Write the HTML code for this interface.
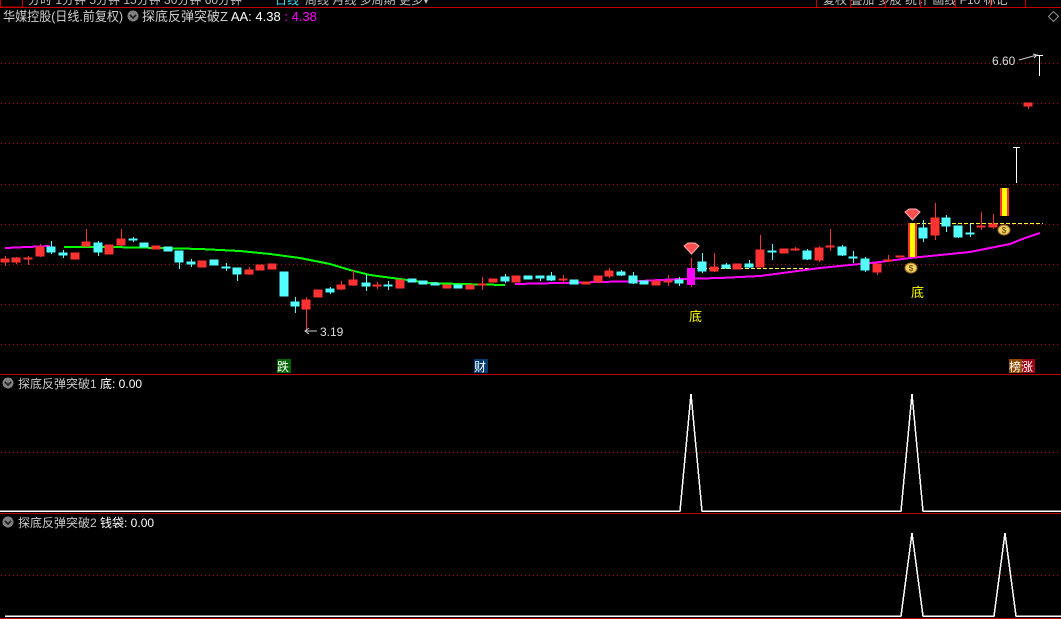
<!DOCTYPE html>
<html><head><meta charset="utf-8"><style>
html,body{margin:0;padding:0;background:#000;width:1061px;height:619px;overflow:hidden}
svg{display:block}
text{font-family:"Liberation Sans","Noto Sans CJK SC",sans-serif}
</style></head><body>
<svg width="1061" height="619" viewBox="0 0 1061 619" xmlns="http://www.w3.org/2000/svg" shape-rendering="crispEdges">
<rect width="1061" height="619" fill="#000"/>
<g fill="#c0c0c0" font-size="12">
<text x="28" y="4">分时 1分钟 5分钟 15分钟 30分钟 60分钟</text>
<text x="275" y="4" fill="#40e0ff">日线</text>
<text x="305" y="4">周线 月线 多周期 更多▾</text>
<text x="823" y="4">复权 叠加 多股 统计 画线 F10 标记</text>
</g>
<rect x="0.5" y="-2" width="22" height="9" fill="none" stroke="#c00000"/>
<line x1="0" y1="7.5" x2="1061" y2="7.5" stroke="#c00000"/>
<g stroke="#c00000"><line x1="816.5" y1="0" x2="816.5" y2="7"/><line x1="850.5" y1="0" x2="850.5" y2="7"/><line x1="885.5" y1="0" x2="885.5" y2="7"/><line x1="920.5" y1="0" x2="920.5" y2="7"/><line x1="955.5" y1="0" x2="955.5" y2="7"/><line x1="990.5" y1="0" x2="990.5" y2="7"/><line x1="1025.5" y1="0" x2="1025.5" y2="7"/></g>
<rect x="1050" y="13" width="7" height="7" fill="none" stroke="#888" transform="rotate(45 1053.5 16.5)"/>
<text x="3" y="21" font-size="13" fill="#d0d0d0" textLength="120" lengthAdjust="spacingAndGlyphs">华媒控股(日线.前复权)</text>
<circle cx="133" cy="16" r="5.5" fill="#808080"/><path d="M130 15 L133 18 L136 15" stroke="#222" stroke-width="1.5" fill="none"/>
<text x="142" y="21" font-size="13" fill="#d0d0d0">探底反弹突破Z <tspan fill="#fff">AA: 4.38</tspan> <tspan fill="#ff00ff">: 4.38</tspan></text>
<g stroke="#a01010" stroke-dasharray="1 3"><line x1="1" y1="63.5" x2="1061" y2="63.5"/><line x1="1" y1="103.5" x2="1061" y2="103.5"/><line x1="1" y1="143.5" x2="1061" y2="143.5"/><line x1="1" y1="184.5" x2="1061" y2="184.5"/><line x1="1" y1="224.5" x2="1061" y2="224.5"/><line x1="1" y1="264.5" x2="1061" y2="264.5"/><line x1="1" y1="304.5" x2="1061" y2="304.5"/><line x1="1" y1="344.5" x2="1061" y2="344.5"/><line x1="1" y1="452.5" x2="1061" y2="452.5"/><line x1="1" y1="575.5" x2="1061" y2="575.5"/></g>
<line x1="697" y1="268.5" x2="822" y2="268.5" stroke="#ffff40" stroke-dasharray="4 2"/>
<line x1="910" y1="223.5" x2="1043" y2="223.5" stroke="#ffff40" stroke-dasharray="4 2"/>
<polyline fill="none" stroke="#ff00ff" stroke-width="2" points="5,248 50,246"/>
<polyline fill="none" stroke="#00ff00" stroke-width="2" points="64,247 110,247 160,248 200,249 240,251 270,254 300,258 330,264 350,270 370,275 400,279 430,283 460,284 505,285"/>
<polyline fill="none" stroke="#ff00ff" stroke-width="2" points="515,284 560,283 600,282 640,281 680,279 720,278 760,276 790,272 820,268 850,265 880,262 910,258 940,255 970,252 990,248 1010,244 1025,238 1040,233"/>
<g fill="#ff3232" stroke="#ff3232">
<line x1="5.5" y1="256" x2="5.5" y2="266"/><rect x="1" y="259" width="8" height="3"/>
<line x1="16.5" y1="257" x2="16.5" y2="264"/><rect x="12" y="258" width="8" height="4"/>
<line x1="28.5" y1="256" x2="28.5" y2="265"/><rect x="24" y="258" width="8" height="1"/>
<line x1="40.5" y1="244" x2="40.5" y2="257"/><rect x="36" y="247" width="8" height="9"/>
<rect x="71" y="253" width="8" height="6"/>
<line x1="86.5" y1="229" x2="86.5" y2="247"/><rect x="82" y="242" width="8" height="4"/>
<rect x="105" y="245" width="8" height="9"/>
<line x1="121.5" y1="229" x2="121.5" y2="246"/><rect x="117" y="239" width="8" height="6"/>
<rect x="152" y="246" width="8" height="3"/>
<rect x="198" y="261" width="8" height="6"/>
<line x1="249.5" y1="267" x2="249.5" y2="275"/><rect x="245" y="270" width="8" height="4"/>
<rect x="256" y="265" width="8" height="5"/>
<rect x="268" y="264" width="8" height="5"/>
<line x1="306.5" y1="297" x2="306.5" y2="330"/><rect x="302" y="300" width="8" height="9"/>
<rect x="314" y="290" width="8" height="7"/>
<line x1="341.5" y1="281" x2="341.5" y2="290"/><rect x="337" y="285" width="8" height="4"/>
<line x1="353.5" y1="270" x2="353.5" y2="286"/><rect x="349" y="280" width="8" height="5"/>
<line x1="377.5" y1="282" x2="377.5" y2="289"/><rect x="373" y="285" width="8" height="1"/>
<rect x="396" y="280" width="8" height="8"/>
<rect x="443" y="285" width="8" height="3"/>
<rect x="466" y="285" width="8" height="4"/>
<line x1="482.5" y1="277" x2="482.5" y2="290"/><rect x="478" y="284" width="8" height="1"/>
<rect x="489" y="279" width="8" height="3"/>
<rect x="512" y="276" width="8" height="6"/>
<line x1="563.5" y1="275" x2="563.5" y2="284"/><rect x="559" y="279" width="8" height="1"/>
<rect x="582" y="282" width="8" height="2"/>
<rect x="594" y="276" width="8" height="6"/>
<line x1="609.5" y1="268" x2="609.5" y2="278"/><rect x="605" y="271" width="8" height="5"/>
<rect x="652" y="281" width="8" height="4"/>
<line x1="668.5" y1="275" x2="668.5" y2="286"/><rect x="664" y="281" width="8" height="1"/>
<line x1="714.5" y1="253" x2="714.5" y2="272"/><rect x="710" y="267" width="8" height="4"/>
<rect x="733" y="264" width="8" height="5"/>
<line x1="760.5" y1="235" x2="760.5" y2="267"/><rect x="756" y="250" width="8" height="17"/>
<rect x="780" y="249" width="8" height="4"/>
<line x1="795.5" y1="247" x2="795.5" y2="251"/><rect x="791" y="249" width="8" height="1"/>
<line x1="819.5" y1="246" x2="819.5" y2="262"/><rect x="815" y="248" width="8" height="12"/>
<line x1="830.5" y1="229" x2="830.5" y2="251"/><rect x="826" y="246" width="8" height="1"/>
<line x1="877.5" y1="264" x2="877.5" y2="275"/><rect x="873" y="264" width="8" height="8"/>
<line x1="888.5" y1="255" x2="888.5" y2="262"/><rect x="884" y="260" width="8" height="1"/>
<rect x="896" y="256" width="8" height="1"/>
<line x1="935.5" y1="203" x2="935.5" y2="240"/><rect x="931" y="218" width="8" height="17"/>
<line x1="981.5" y1="212" x2="981.5" y2="230"/><rect x="977" y="226" width="8" height="1"/>
<line x1="993.5" y1="214" x2="993.5" y2="229"/><rect x="989" y="224" width="8" height="3"/>
<line x1="1028.5" y1="103" x2="1028.5" y2="109"/><rect x="1024" y="103" width="8" height="3"/>
</g>
<g fill="#54ffff" stroke="#54ffff">
<line x1="51.5" y1="241" x2="51.5" y2="254"/><rect x="47" y="247" width="8" height="5"/>
<line x1="63.5" y1="250" x2="63.5" y2="258"/><rect x="59" y="253" width="8" height="2"/>
<line x1="98.5" y1="241" x2="98.5" y2="256"/><rect x="94" y="243" width="8" height="9"/>
<line x1="133.5" y1="237" x2="133.5" y2="242"/><rect x="129" y="239" width="8" height="1"/>
<rect x="140" y="243" width="8" height="4"/>
<rect x="164" y="247" width="8" height="4"/>
<line x1="179.5" y1="251" x2="179.5" y2="269"/><rect x="175" y="251" width="8" height="11"/>
<line x1="191.5" y1="259" x2="191.5" y2="267"/><rect x="187" y="262" width="8" height="2"/>
<rect x="210" y="260" width="8" height="5"/>
<line x1="226.5" y1="263" x2="226.5" y2="271"/><rect x="222" y="267" width="8" height="1"/>
<line x1="237.5" y1="268" x2="237.5" y2="281"/><rect x="233" y="268" width="8" height="6"/>
<rect x="280" y="272" width="8" height="24"/>
<line x1="295.5" y1="297" x2="295.5" y2="313"/><rect x="291" y="302" width="8" height="4"/>
<line x1="330.5" y1="287" x2="330.5" y2="294"/><rect x="326" y="289" width="8" height="3"/>
<line x1="366.5" y1="275" x2="366.5" y2="291"/><rect x="362" y="283" width="8" height="3"/>
<line x1="388.5" y1="281" x2="388.5" y2="290"/><rect x="384" y="285" width="8" height="1"/>
<rect x="408" y="279" width="8" height="3"/>
<rect x="419" y="281" width="8" height="3"/>
<rect x="431" y="283" width="8" height="2"/>
<rect x="454" y="285" width="8" height="3"/>
<line x1="505.5" y1="274" x2="505.5" y2="283"/><rect x="501" y="277" width="8" height="4"/>
<rect x="524" y="276" width="8" height="3"/>
<line x1="540.5" y1="276" x2="540.5" y2="281"/><rect x="536" y="276" width="8" height="2"/>
<line x1="551.5" y1="272" x2="551.5" y2="281"/><rect x="547" y="276" width="8" height="4"/>
<rect x="570" y="280" width="8" height="4"/>
<line x1="621.5" y1="270" x2="621.5" y2="276"/><rect x="617" y="272" width="8" height="3"/>
<line x1="633.5" y1="272" x2="633.5" y2="284"/><rect x="629" y="276" width="8" height="7"/>
<rect x="640" y="281" width="8" height="3"/>
<line x1="679.5" y1="277" x2="679.5" y2="286"/><rect x="675" y="280" width="8" height="3"/>
<line x1="702.5" y1="253" x2="702.5" y2="273"/><rect x="698" y="262" width="8" height="9"/>
<line x1="726.5" y1="263" x2="726.5" y2="269"/><rect x="722" y="265" width="8" height="3"/>
<line x1="749.5" y1="260" x2="749.5" y2="268"/><rect x="745" y="264" width="8" height="3"/>
<line x1="772.5" y1="244" x2="772.5" y2="260"/><rect x="768" y="251" width="8" height="1"/>
<line x1="807.5" y1="249" x2="807.5" y2="260"/><rect x="803" y="251" width="8" height="8"/>
<line x1="842.5" y1="245" x2="842.5" y2="256"/><rect x="838" y="247" width="8" height="8"/>
<line x1="853.5" y1="251" x2="853.5" y2="263"/><rect x="849" y="257" width="8" height="1"/>
<line x1="865.5" y1="257" x2="865.5" y2="272"/><rect x="861" y="259" width="8" height="11"/>
<line x1="923.5" y1="220" x2="923.5" y2="242"/><rect x="919" y="228" width="8" height="10"/>
<line x1="946.5" y1="215" x2="946.5" y2="232"/><rect x="942" y="218" width="8" height="8"/>
<line x1="958.5" y1="226" x2="958.5" y2="238"/><rect x="954" y="226" width="8" height="11"/>
<line x1="970.5" y1="224" x2="970.5" y2="237"/><rect x="966" y="233" width="8" height="1"/>
</g>
<line x1="691.5" y1="258" x2="691.5" y2="287" stroke="#ff3232"/>
<rect x="687" y="268" width="8" height="17" fill="#ff00ff"/>
<rect x="908" y="223" width="9" height="34" fill="#ff3232"/><rect x="910" y="223" width="5" height="34" fill="#ffff00"/>
<rect x="1000" y="188" width="9" height="28" fill="#ff3232"/><rect x="1002" y="188" width="5" height="28" fill="#ffff00"/>
<g stroke="#fff"><line x1="1016.5" y1="147" x2="1016.5" y2="183"/><line x1="1013" y1="147.5" x2="1020" y2="147.5"/><line x1="1039.5" y1="55" x2="1039.5" y2="76"/><line x1="1036" y1="55.5" x2="1043" y2="55.5"/></g>
<g shape-rendering="auto">
<path d="M684 246 L688 243 L695 243 L699 246 L691.5 254 Z" fill="#ff5050" stroke="#ffb0b0"/>
<path d="M905 212 L909 209 L916 209 L920 212 L912.5 220 Z" fill="#ff5050" stroke="#ffb0b0"/>
<ellipse cx="911" cy="268" rx="6" ry="5" fill="#f0d060" stroke="#a07020"/><text x="911" y="271" font-size="8" fill="#603000" text-anchor="middle">$</text>
<ellipse cx="1004" cy="230" rx="6" ry="5" fill="#f0d060" stroke="#a07020"/><text x="1004" y="233" font-size="8" fill="#603000" text-anchor="middle">$</text>
<path d="M1019 60 L1037 55 M1033 54 L1037 55 L1034 58" stroke="#ccc" fill="none"/>
<path d="M305 331 L317 331 M309 328 L305 331 L309 334" stroke="#ccc" fill="none"/>
</g>
<text x="992" y="65" font-size="12" fill="#ddd">6.60</text>
<text x="320" y="336" font-size="12" fill="#ddd">3.19</text>
<text x="689" y="321" font-size="13" fill="#ffff00">底</text>
<text x="911" y="297" font-size="13" fill="#ffff00">底</text>
<rect x="277" y="359" width="14" height="14" fill="#006400"/><text x="277" y="371" font-size="12" fill="#fff">跌</text>
<rect x="474" y="359" width="14" height="14" fill="#003a6e"/><text x="474" y="371" font-size="12" fill="#fff">财</text>
<rect x="1009" y="359" width="13" height="14" fill="#8b4a00"/><rect x="1022" y="359" width="13" height="14" fill="#a00010"/><text x="1009" y="371" font-size="12" fill="#fff">榜涨</text>
<line x1="0" y1="374.5" x2="1061" y2="374.5" stroke="#c00000"/>
<circle cx="8" cy="383" r="5.5" fill="#808080"/><path d="M5 382 L8 385 L11 382" stroke="#222" stroke-width="1.5" fill="none"/>
<text x="18" y="388" font-size="12" fill="#c8c8c8">探底反弹突破1 <tspan fill="#fff">底: 0.00</tspan></text>
<polyline fill="none" stroke="#fff" stroke-width="1.5" points="0,511 680,511 691,394 702,511 901,511 912,394 923,511 1061,511"/>
<line x1="0" y1="513.5" x2="1061" y2="513.5" stroke="#c00000"/>
<circle cx="8" cy="522" r="5.5" fill="#808080"/><path d="M5 521 L8 524 L11 521" stroke="#222" stroke-width="1.5" fill="none"/>
<text x="18" y="527" font-size="12" fill="#c8c8c8">探底反弹突破2 <tspan fill="#fff">钱袋: 0.00</tspan></text>
<polyline fill="none" stroke="#fff" stroke-width="1.5" points="5,616 901,616 912,533 923,616 994,616 1005,533 1016,616 1061,616"/>
<line x1="0" y1="618.5" x2="1061" y2="618.5" stroke="#c00000"/>
</svg>
</body></html>
